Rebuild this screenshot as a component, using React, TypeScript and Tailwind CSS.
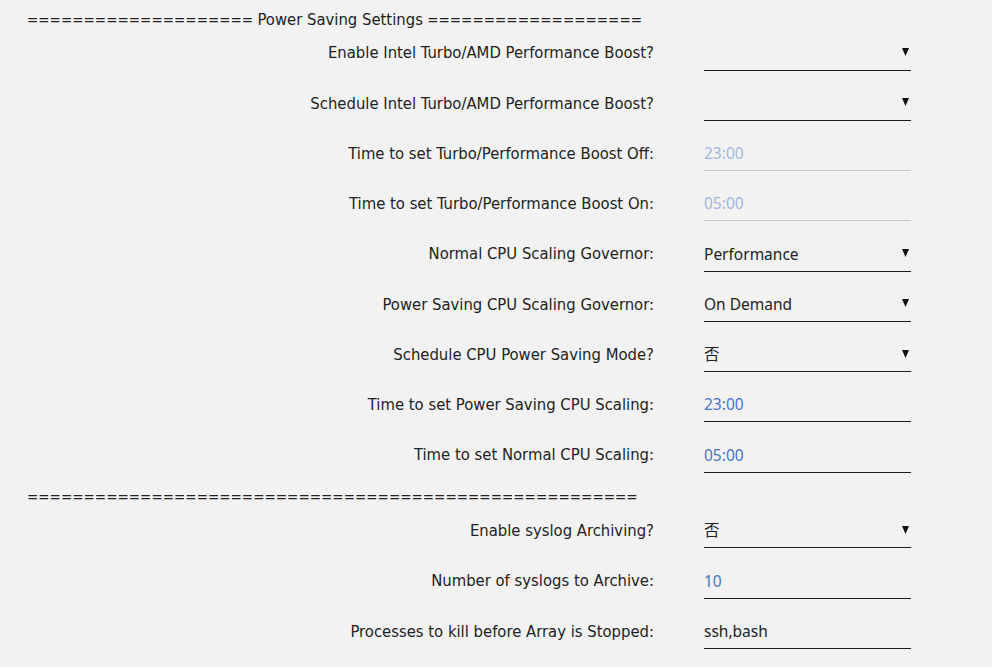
type Field = {
  label: string
  kind: "select" | "text"
  value?: string
  tone?: "dark" | "blue" | "faded"
  disabled?: boolean
}

const power: Field[] = [
  { label: "Enable Intel Turbo/AMD Performance Boost?", kind: "select", value: "" },
  { label: "Schedule Intel Turbo/AMD Performance Boost?", kind: "select", value: "" },
  { label: "Time to set Turbo/Performance Boost Off:", kind: "text", value: "23:00", tone: "faded", disabled: true },
  { label: "Time to set Turbo/Performance Boost On:", kind: "text", value: "05:00", tone: "faded", disabled: true },
  { label: "Normal CPU Scaling Governor:", kind: "select", value: "Performance" },
  { label: "Power Saving CPU Scaling Governor:", kind: "select", value: "On Demand" },
  { label: "Schedule CPU Power Saving Mode?", kind: "select", value: "否" },
  { label: "Time to set Power Saving CPU Scaling:", kind: "text", value: "23:00", tone: "blue" },
  { label: "Time to set Normal CPU Scaling:", kind: "text", value: "05:00", tone: "blue" },
]

const syslog: Field[] = [
  { label: "Enable syslog Archiving?", kind: "select", value: "否" },
  { label: "Number of syslogs to Archive:", kind: "text", value: "10", tone: "blue" },
  { label: "Processes to kill before Array is Stopped:", kind: "text", value: "ssh,bash", tone: "dark" },
]

const labelFont = "font-['DejaVu_Sans_Condensed','DejaVu_Sans','Noto_Sans_CJK_SC',sans-serif]"
const valueFont = "font-['Noto_Sans','Noto_Sans_CJK_SC',sans-serif]"

function Row({ f }: { f: Field }) {
  const color =
    f.tone === "blue" ? "text-[#4a72c4]" : f.tone === "faded" ? "text-[#a3b6dc]" : "text-[#222]"
  return (
    <div className="flex items-center h-[50.25px]">
      <div className={`w-[654px] text-right text-[16.5px] text-[#222] ${labelFont}`}>{f.label}</div>
      <div
        className={`ml-[50px] w-[207px] h-[34px] flex items-center justify-between border-b ${
          f.disabled ? "border-[#c8c8c8]" : "border-[#1c1c1c]"
        }`}
      >
        <span className={`text-[15.5px] ${color} ${valueFont}`}>{f.value}</span>
        {f.kind === "select" && (
          <svg width="7" height="8" viewBox="0 0 7 8" className="mr-[2px] mb-[2px]">
            <path d="M0 0 H7 L3.5 8 Z" fill="#111" />
          </svg>
        )}
      </div>
    </div>
  )
}

function Separator({ children }: { children: React.ReactNode }) {
  return (
    <div className={`pl-[27px] text-[15px] leading-[22.5px] text-[#222] whitespace-pre ${labelFont}`}>
      {children}
    </div>
  )
}

export default function App() {
  return (
    <div className="min-h-screen bg-[#f2f2f2] pt-[9px]">
      <Separator>
        {"=".repeat(20)} <span className="text-[16.5px]">Power Saving Settings</span> {"=".repeat(19)}
      </Separator>
      <div className="-mt-[3px]">
        {power.map((f) => (
          <Row key={f.label} f={f} />
        ))}
      </div>
      <div className="pt-[5px]">
        <Separator>{"=".repeat(54)}</Separator>
      </div>
      <div className="-mt-[2px]">
        {syslog.map((f) => (
          <Row key={f.label} f={f} />
        ))}
      </div>
    </div>
  )
}
